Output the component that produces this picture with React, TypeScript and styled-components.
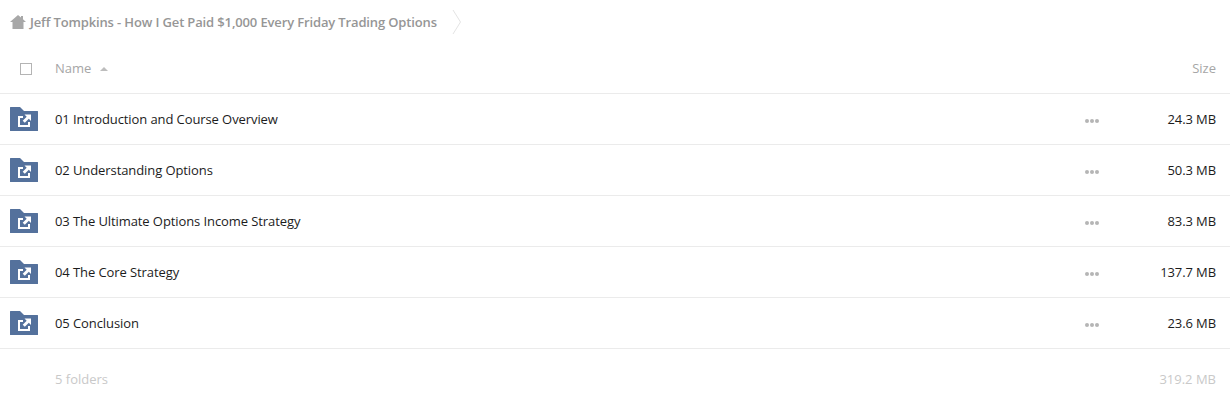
import styled, { createGlobalStyle } from 'styled-components';

const GlobalStyle = createGlobalStyle`
  html, body {
    margin: 0;
    background: #fff;
    font-family: "Open Sans", "Liberation Sans", sans-serif;
    font-size: 13px;
  }
`;

const Page = styled.div`
  width: 1230px;
  height: 404px;
  overflow: hidden;
`;

const Breadcrumb = styled.nav`
  display: flex;
  align-items: center;
  height: 44px;
  padding-left: 10px;
`;

const HomeIcon = styled.svg`
  width: 16px;
  height: 14px;
  margin-right: 4px;
  fill: #a8a8a8;
`;

const Crumb = styled.span`
  color: #969696;
  font-weight: 600;
  font-size: 13px;
  letter-spacing: -0.14px;
  line-height: 44px;
`;

const Chevron = styled.svg`
  width: 10px;
  height: 26px;
  margin-left: 15px;
  fill: none;
  stroke: #e4e4e4;
  stroke-width: 1;
`;

const HeaderRow = styled.div`
  display: flex;
  align-items: center;
  height: 49px;
  padding: 0 14px 0 20px;
  border-bottom: 1px solid #ebebeb;
`;

const Checkbox = styled.span`
  box-sizing: border-box;
  width: 12px;
  height: 12px;
  border: 1px solid #b4b4b4;
  margin-right: 23px;
`;

const NameHead = styled.span`
  flex: 1;
  display: flex;
  align-items: center;
  color: #a6a6a6;
  font-size: 13px;
  padding-bottom: 2px;
`;

const SortArrow = styled.span`
  width: 0;
  height: 0;
  margin-left: 9px;
  margin-top: 2px;
  border-style: solid;
  border-width: 0 4px 4px 4px;
  border-color: transparent transparent #bdbdbd transparent;
`;

const SizeHead = styled.span`
  color: #a6a6a6;
  font-size: 13px;
  padding-bottom: 2px;
`;

const Row = styled.div`
  display: flex;
  align-items: center;
  height: 50px;
  padding: 0 14px 0 10px;
  border-bottom: 1px solid #ebebeb;
`;

const FolderIcon = styled.svg`
  width: 28px;
  height: 24px;
  margin-right: 17px;
  flex-shrink: 0;
`;

const RowName = styled.span`
  flex: 1;
  color: #1c1c1c;
  font-size: 13px;
  letter-spacing: -0.09px;
`;

const Dots = styled.span`
  display: flex;
  gap: 1px;
  margin-top: 3px;
`;

const Dot = styled.span`
  width: 4px;
  height: 4px;
  border-radius: 50%;
  background: #b5b5b5;
`;

const RowSize = styled.span`
  width: 117px;
  text-align: right;
  color: #1c1c1c;
  font-size: 13px;
  letter-spacing: -0.1px;
`;

const Summary = styled.div`
  display: flex;
  justify-content: space-between;
  align-items: center;
  height: 60px;
  padding: 0 14px 0 55px;
  color: #c9c9c9;
  font-size: 13px;
`;

const folders = [
  { name: '01 Introduction and Course Overview', size: '24.3 MB' },
  { name: '02 Understanding Options', size: '50.3 MB' },
  { name: '03 The Ultimate Options Income Strategy', size: '83.3 MB' },
  { name: '04 The Core Strategy', size: '137.7 MB' },
  { name: '05 Conclusion', size: '23.6 MB' },
];

function SharedFolder() {
  return (
    <FolderIcon viewBox="0 0 28 24">
      <path d="M0 .5 Q0 0 .5 0 H10 L14 4 H27.5 Q28 4 28 4.5 V23.5 Q28 24 27.5 24 H.5 Q0 24 0 23.5 Z" fill="#54719c" />
      <path d="M8 9 H13 V11 H10 V18 H18 V15 H20 V20 H8 Z" fill="#fff" />
      <path d="M14.5 7.5 H21 V14 L18.8 11.8 L14.8 15.8 L12.7 13.7 L16.7 9.7 Z" fill="#fff" />
    </FolderIcon>
  );
}

export default function App() {
  return (
    <Page>
      <GlobalStyle />
      <Breadcrumb>
        <HomeIcon viewBox="0 0 16 14">
          <path d="M8 0 L11 2.5 V1 H13 V4.2 L16 7 H13.5 V14 H2.5 V7 H0 Z" />
        </HomeIcon>
        <Crumb>Jeff Tompkins - How I Get Paid $1,000 Every Friday Trading Options</Crumb>
        <Chevron viewBox="0 0 10 26">
          <path d="M1 1 L8.5 13 L1 25" />
        </Chevron>
      </Breadcrumb>
      <HeaderRow>
        <Checkbox />
        <NameHead>
          Name
          <SortArrow />
        </NameHead>
        <SizeHead>Size</SizeHead>
      </HeaderRow>
      {folders.map((folder) => (
        <Row key={folder.name}>
          <SharedFolder />
          <RowName>{folder.name}</RowName>
          <Dots>
            <Dot />
            <Dot />
            <Dot />
          </Dots>
          <RowSize>{folder.size}</RowSize>
        </Row>
      ))}
      <Summary>
        <span>5 folders</span>
        <span>319.2 MB</span>
      </Summary>
    </Page>
  );
}
